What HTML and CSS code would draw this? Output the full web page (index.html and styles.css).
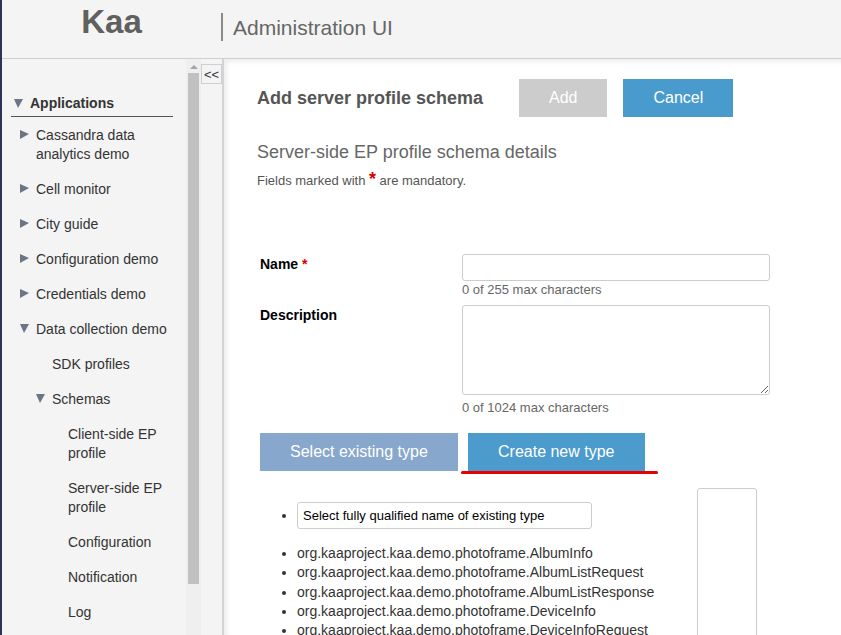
FILE: index.html
```html
<!DOCTYPE html>
<html>
<head>
<meta charset="utf-8">
<title>Kaa Administration UI</title>
<link rel="stylesheet" href="styles.css">
</head>
<body>
<div class="app">
  <header class="header">
    <div class="logo">Kaa</div>
    <div class="sep"></div>
    <div class="app-title">Administration UI</div>
  </header>
  <div class="body">
    <aside class="sidebar">
      <nav class="nav">
        <div class="nav-head"><span class="caret down"></span>Applications</div>
        <div class="nav-item l1"><span class="caret right"></span><span class="label">Cassandra data analytics demo</span></div>
        <div class="nav-item l1"><span class="caret right"></span><span class="label">Cell monitor</span></div>
        <div class="nav-item l1"><span class="caret right"></span><span class="label">City guide</span></div>
        <div class="nav-item l1"><span class="caret right"></span><span class="label">Configuration demo</span></div>
        <div class="nav-item l1"><span class="caret right"></span><span class="label">Credentials demo</span></div>
        <div class="nav-item l1"><span class="caret down"></span><span class="label">Data collection demo</span></div>
        <div class="nav-item l2-leaf"><span class="label">SDK profiles</span></div>
        <div class="nav-item l2"><span class="caret down"></span><span class="label">Schemas</span></div>
        <div class="nav-item l3"><span class="label">Client-side EP profile</span></div>
        <div class="nav-item l3"><span class="label">Server-side EP profile</span></div>
        <div class="nav-item l3"><span class="label">Configuration</span></div>
        <div class="nav-item l3"><span class="label">Notification</span></div>
        <div class="nav-item l3"><span class="label">Log</span></div>
      </nav>
      <div class="scrollbar"><div class="sb-arrow"></div><div class="sb-thumb"></div></div>
      <div class="collapse"><button class="collapse-btn">&lt;&lt;</button></div>
    </aside>
    <main class="main">
      <div class="toolbar">
        <div class="page-title">Add server profile schema</div>
        <button class="btn btn-disabled">Add</button>
        <button class="btn btn-primary btn-cancel">Cancel</button>
      </div>
      <div class="subtitle">Server-side EP profile schema details</div>
      <div class="mandatory">Fields marked with <span class="req-big">*</span> are mandatory.</div>

      <div class="form">
        <div class="form-label">Name <span class="req">*</span></div>
        <div class="form-field">
          <input class="text-input" type="text">
          <div class="helper">0 of 255 max characters</div>
        </div>
        <div class="form-label">Description</div>
        <div class="form-field">
          <textarea class="text-area"></textarea>
          <div class="helper helper-ta">0 of 1024 max characters</div>
        </div>
      </div>

      <div class="tabs">
        <div class="tab-cell">
          <button class="tab-btn tab-inactive">Select existing type</button>
        </div>
        <div class="tab-cell tab-cell-active">
          <button class="tab-btn tab-active">Create new type</button>
          <div class="tab-underline"></div>
        </div>
      </div>

      <div class="tab-content">
        <div class="type-lists">
          <ul class="select-list">
            <li><div class="fake-select">Select fully qualified name of existing type</div></li>
          </ul>
          <ul class="type-list">
            <li>org.kaaproject.kaa.demo.photoframe.AlbumInfo</li>
            <li>org.kaaproject.kaa.demo.photoframe.AlbumListRequest</li>
            <li>org.kaaproject.kaa.demo.photoframe.AlbumListResponse</li>
            <li>org.kaaproject.kaa.demo.photoframe.DeviceInfo</li>
            <li>org.kaaproject.kaa.demo.photoframe.DeviceInfoRequest</li>
          </ul>
        </div>
        <div class="side-box"></div>
      </div>
    </main>
  </div>
</div>
</body>
</html>
```

FILE: styles.css
```css
* { box-sizing: border-box; }
html, body { margin: 0; padding: 0; }
body {
  font-family: "Liberation Sans", Arial, sans-serif;
  color: #333;
  background: #fff;
  overflow: hidden;
  height: 635px;
}
.app {
  height: 635px;
  border-left: 2px solid #2b3358;
  display: flex;
  flex-direction: column;
}

/* Header */
.header {
  height: 59px;
  flex: none;
  background: #f4f4f4;
  border-bottom: 1px solid #cfcfcf;
  display: flex;
  align-items: flex-start;
}
.logo {
  width: 219px;
  margin-top: 5px;
  text-align: center;
  font-size: 33px;
  line-height: 33px;
  font-weight: bold;
  color: #606060;
}
.sep {
  width: 2px;
  height: 28px;
  margin-top: 13px;
  background: #8a8a8a;
}
.app-title {
  margin-top: 17px;
  margin-left: 10px;
  font-size: 21px;
  line-height: 21px;
  color: #666;
}

/* Body */
.body {
  flex: 1;
  display: flex;
  min-height: 0;
}
.sidebar {
  width: 220px;
  flex: none;
  display: flex;
  background: #f4f4f4;
}
.nav {
  width: 184px;
  flex: none;
  padding: 35px 6px 0 0;
  overflow: hidden;
  font-size: 14px;
  line-height: 19px;
  color: #333;
}
.nav-head {
  margin-left: 9px;
  width: 162px;
  padding: 0 0 3px 3px;
  border-bottom: 1px solid #555;
  margin-bottom: 1px;
  font-weight: bold;
  display: flex;
  align-items: center;
}
.caret {
  flex: none;
  width: 0;
  height: 0;
  margin-right: 7px;
}
.caret.down {
  border-left: 4px solid transparent;
  border-right: 5px solid transparent;
  border-top: 9px solid #6c7584;
}
.caret.right {
  border-top: 4px solid transparent;
  border-bottom: 5px solid transparent;
  border-left: 9px solid #6c7584;
}
.nav-item {
  display: flex;
  align-items: flex-start;
  padding-top: 8px;
  padding-bottom: 8px;
}
.nav-item .caret { margin-top: 4px; }
.nav-item.l1 { padding-left: 18px; }
.nav-item.l2 { padding-left: 34px; }
.nav-item.l2-leaf { padding-left: 50px; }
.nav-item.l3 { padding-left: 66px; }

.scrollbar {
  width: 15px;
  flex: none;
  background: #efefef;
  display: flex;
  flex-direction: column;
  align-items: center;
}
.sb-arrow {
  margin-top: 6px;
  width: 0;
  height: 0;
  border-left: 4px solid transparent;
  border-right: 4px solid transparent;
  border-bottom: 4px solid #a3a3a3;
}
.sb-thumb {
  margin-top: 4px;
  width: 11px;
  height: 511px;
  background: #c1c1c1;
}
.collapse {
  width: 21px;
  flex: none;
}
.collapse-btn {
  display: block;
  margin-top: 5px;
  width: 21px;
  height: 20px;
  padding: 0;
  border: 1px solid #cfcfcf;
  background: #f4f4f4;
  font-family: "Liberation Sans", Arial, sans-serif;
  font-size: 13px;
  color: #333;
}

/* Main */
.main {
  flex: 1;
  min-width: 0;
  border-left: 2px solid #d4d4d4;
  box-shadow: inset 3px 3px 4px rgba(0, 0, 0, 0.07);
  padding: 20px 0 0 33px;
  overflow: hidden;
  background: #fff;
}
.toolbar {
  display: flex;
  align-items: center;
}
.page-title {
  width: 262px;
  flex: none;
  font-size: 18px;
  font-weight: bold;
  color: #555;
}
.btn {
  height: 38px;
  padding: 0 30px;
  border: none;
  font-family: "Liberation Sans", Arial, sans-serif;
  font-size: 16px;
  color: #fff;
}
.btn-disabled { background: #cccccc; }
.btn-primary { background: #4a9bcd; }
.btn-cancel { margin-left: 16px; }

.subtitle {
  margin-top: 24px;
  font-size: 18px;
  line-height: 22px;
  color: #666;
}
.mandatory {
  margin-top: 8px;
  font-size: 13px;
  line-height: 16px;
  color: #555;
}
.req-big {
  font-size: 18px;
  font-weight: bold;
  color: #d40000;
}

.form {
  margin-top: 65px;
  margin-left: 3px;
  display: grid;
  grid-template-columns: 202px 308px;
  row-gap: 8px;
}
.form-label {
  padding-top: 2px;
  font-size: 14px;
  line-height: 17px;
  font-weight: bold;
  color: #000;
}
.req { color: #d40000; }
.text-input {
  display: block;
  width: 308px;
  height: 27px;
  margin: 0;
  border: 1px solid #ccc;
  border-radius: 3px;
  background: #fff;
}
.text-area {
  display: block;
  width: 308px;
  height: 90px;
  margin: 0;
  border: 1px solid #ccc;
  border-radius: 3px;
  background: #fff;
}
.helper {
  margin-top: 1px;
  font-size: 13px;
  line-height: 15px;
  color: #666;
}
.helper-ta { margin-top: 5px; }

.tabs {
  margin-top: 18px;
  margin-left: 3px;
  display: flex;
}
.tab-cell { width: 201px; flex: none; }
.tab-cell-active { width: 197px; }
.tab-btn {
  display: block;
  height: 38px;
  padding: 0 30px;
  border: none;
  font-family: "Liberation Sans", Arial, sans-serif;
  font-size: 16px;
  color: #fff;
}
.tab-inactive { background: #87a8cc; }
.tab-active { background: #4b9bcd; margin-left: 7px; }
.tab-underline {
  height: 3px;
  background: #e60000;
  border-radius: 2px;
}

.tab-content {
  margin-top: 14px;
  display: flex;
  align-items: flex-start;
}
.type-lists { width: 440px; flex: none; }
.select-list {
  margin: 14px 0 0;
  padding-left: 40px;
  font-size: 14px;
}
.fake-select {
  width: 295px;
  height: 27px;
  border: 1px solid #ccc;
  border-radius: 3px;
  padding-left: 5px;
  font-size: 13px;
  line-height: 25px;
  color: #000;
}
.type-list {
  margin: 15px 0 0;
  padding-left: 40px;
  font-size: 14px;
  line-height: 19.25px;
  color: #333;
}
.side-box {
  width: 60px;
  height: 200px;
  flex: none;
  border: 1px solid #ccc;
  border-radius: 3px;
}
```
